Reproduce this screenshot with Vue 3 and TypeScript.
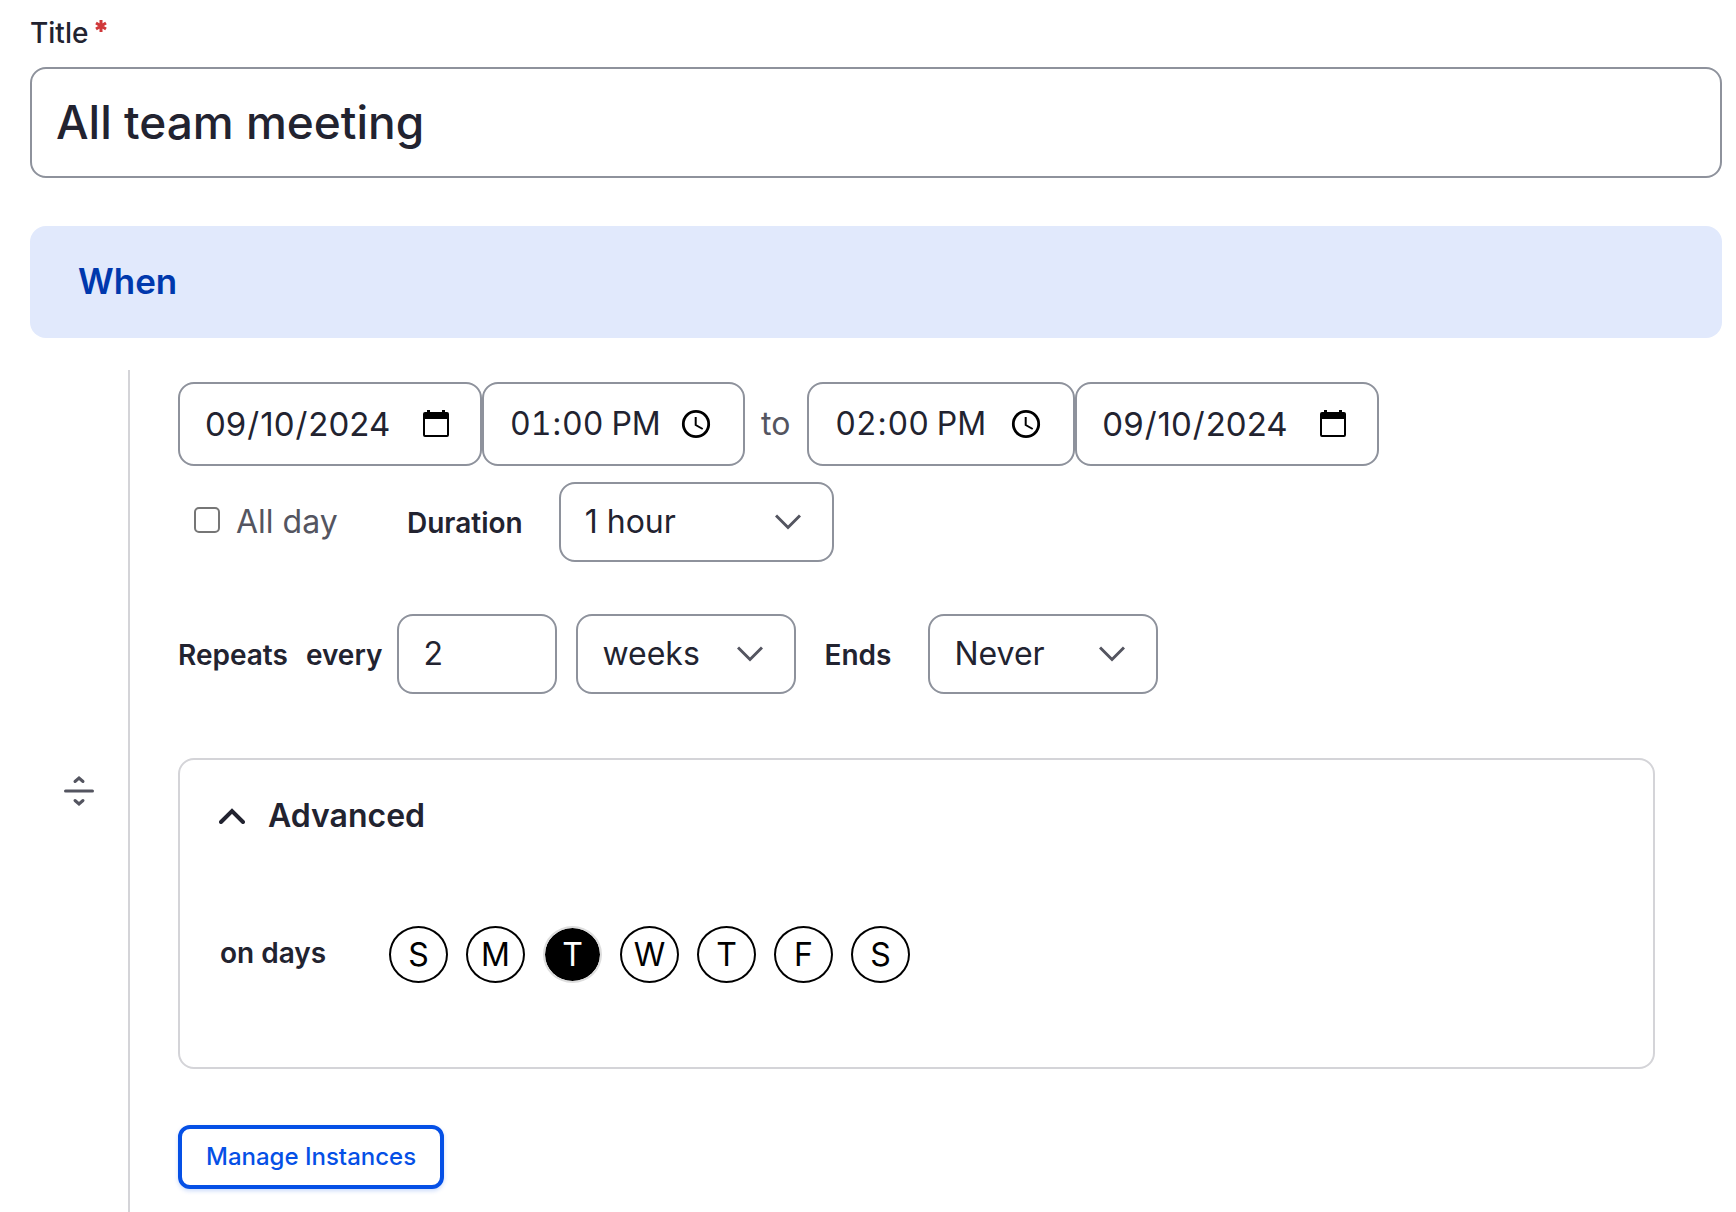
<script setup lang="ts">
import { ref } from 'vue'

interface Day {
  id: string
  letter: string
  name: string
  on: boolean
}

const title = ref('All team meeting')
const startDate = ref('2024-09-10')
const startTime = ref('13:00')
const endTime = ref('14:00')
const endDate = ref('2024-09-10')
const allDay = ref(false)
const duration = ref('1 hour')
const interval = ref('2')
const unit = ref('weeks')
const ends = ref('Never')

const days = ref<Day[]>([
  { id: 'su', letter: 'S', name: 'Sunday', on: false },
  { id: 'mo', letter: 'M', name: 'Monday', on: false },
  { id: 'tu', letter: 'T', name: 'Tuesday', on: true },
  { id: 'we', letter: 'W', name: 'Wednesday', on: false },
  { id: 'th', letter: 'T', name: 'Thursday', on: false },
  { id: 'fr', letter: 'F', name: 'Friday', on: false },
  { id: 'sa', letter: 'S', name: 'Saturday', on: false },
])
</script>

<template>
  <form class="page" @submit.prevent>
    <label class="label title-label" for="title">Title<svg class="required" viewBox="0 0 12 12" aria-hidden="true"><path d="M6 0v12M1 3l10 6M11 3L1 9" /></svg></label>
    <input id="title" v-model="title" class="field title-input" type="text" required />

    <h2 class="when">When</h2>

    <div class="item">
      <div class="handle">
        <svg width="30" height="30" viewBox="0 0 30 30" aria-hidden="true">
          <path d="M1.5 15h27" />
          <path d="M11 5.5L15 2l4 3.5M11 24.5l4 3.5 4-3.5" />
        </svg>
      </div>

      <div class="body">
        <div class="row range">
          <input v-model="startDate" class="field date" type="date" aria-label="Start date" />
          <input v-model="startTime" class="field time" type="time" aria-label="Start time" />
          <span class="to">to</span>
          <input v-model="endTime" class="field time end" type="time" aria-label="End time" />
          <input v-model="endDate" class="field date" type="date" aria-label="End date" />
        </div>

        <div class="row options">
          <label class="all-day"><input v-model="allDay" type="checkbox" />All day</label>
          <label class="label" for="duration">Duration</label>
          <div class="select duration">
            <select id="duration" v-model="duration" class="field">
              <option>1 hour</option>
              <option>2 hours</option>
            </select>
            <svg class="chevron" viewBox="0 0 26 16" aria-hidden="true"><path d="M1 1.5l12 12 12-12" /></svg>
          </div>
        </div>

        <div class="row repeats">
          <span class="label">Repeats</span>
          <label class="label every" for="interval">every</label>
          <input id="interval" v-model="interval" class="field interval" type="text" inputmode="numeric" />
          <div class="select unit">
            <select v-model="unit" class="field" aria-label="Repeat unit">
              <option>days</option>
              <option>weeks</option>
              <option>months</option>
            </select>
            <svg class="chevron" viewBox="0 0 26 16" aria-hidden="true"><path d="M1 1.5l12 12 12-12" /></svg>
          </div>
          <label class="label ends-label" for="ends">Ends</label>
          <div class="select ends">
            <select id="ends" v-model="ends" class="field">
              <option>Never</option>
              <option>On date</option>
            </select>
            <svg class="chevron" viewBox="0 0 26 16" aria-hidden="true"><path d="M1 1.5l12 12 12-12" /></svg>
          </div>
        </div>

        <details class="advanced" open>
          <summary>
            <svg class="caret" viewBox="0 0 26 16" aria-hidden="true"><path d="M2 14L13 3l11 11" /></svg>
            <span>Advanced</span>
          </summary>
          <div class="row days-row" role="group" aria-labelledby="days-label">
            <span id="days-label" class="label days-label">on days</span>
            <div class="days">
              <label v-for="day in days" :key="day.id" class="day">
                <input v-model="day.on" type="checkbox" :aria-label="day.name" />
                <span>{{ day.letter }}</span>
              </label>
            </div>
          </div>
        </details>

        <button class="manage" type="button">Manage Instances</button>
      </div>
    </div>
  </form>
</template>

<style>
body {
  background: #fff;
}
</style>

<style scoped>
.page {
  display: flex;
  flex-direction: column;
  box-sizing: border-box;
  min-height: 100vh;
  padding: 15px 14px 0 30px;
  color: #222330;
  font-family: Inter, "Liberation Sans", sans-serif;
  font-size: 32px;
  line-height: 40px;
}

.page * {
  box-sizing: border-box;
}

.label {
  font-size: 28px;
  font-weight: 600;
  line-height: 36px;
}

.title-label {
  display: flex;
  gap: 7px;
  margin-bottom: 16px;
  font-weight: 500;
}

.required {
  width: 12px;
  height: 12px;
  margin-top: 5px;
  fill: none;
  stroke: #d0383a;
  stroke-width: 3;
}

.field {
  height: 80px;
  margin: 0;
  padding: 0 24px;
  border: 2px solid #8e929c;
  border-radius: 16px;
  outline: none;
  background: #fff;
  color: #222330;
  font: inherit;
}

.title-input {
  width: 100%;
  height: 111px;
  padding-bottom: 2px;
  font-size: 46px;
  font-weight: 500;
}

.when {
  margin: 48px 0 32px;
  padding: 31px 48px 33px;
  border-radius: 16px;
  background: #e1e9fc;
  color: #0038ad;
  font-size: 35px;
  font-weight: 600;
  line-height: 48px;
}

.item {
  display: flex;
  flex: 1;
}

.handle {
  display: flex;
  flex: none;
  align-items: center;
  justify-content: center;
  width: 98px;
}

.handle svg {
  fill: none;
  stroke: #545560;
  stroke-width: 3;
  stroke-linecap: round;
}

.body {
  flex: 1;
  padding: 12px 67px 22px 48px;
  border-left: 2px solid #d4d4d8;
}

.row {
  display: flex;
  align-items: center;
}

.options .label,
.repeats .label {
  padding-top: 2px;
}

.range .field {
  height: 84px;
}

.range .date {
  width: 304px;
  padding: 0 28px 0 24px;
  font-size: 33px;
}

.range .time {
  width: 263px;
  padding: 0 31px 0 25px;
  font-variant-numeric: tabular-nums;
}

.range .end {
  width: 268px;
}

.date::-webkit-calendar-picker-indicator,
.time::-webkit-calendar-picker-indicator {
  width: 32px;
  height: 32px;
  margin: 0;
  padding: 0;
  background-position: center;
  background-repeat: no-repeat;
  background-size: 32px 32px;
}

.date::-webkit-calendar-picker-indicator {
  background-image: url("data:image/svg+xml,%3Csvg xmlns='http://www.w3.org/2000/svg' viewBox='0 0 32 32'%3E%3Cpath d='M3 6a2 2 0 0 1 2-2h2V2h3v2h12V2h3v2h2a2 2 0 0 1 2 2v21a2 2 0 0 1-2 2H5a2 2 0 0 1-2-2zM5 11v16h22V11z' fill-rule='evenodd'/%3E%3C/svg%3E");
}

.time::-webkit-calendar-picker-indicator {
  background-image: url("data:image/svg+xml,%3Csvg xmlns='http://www.w3.org/2000/svg' viewBox='0 0 32 32' fill='none' stroke='%23000'%3E%3Ccircle cx='16' cy='16' r='12.7' stroke-width='2.8'/%3E%3Cpath d='M15.7 9v8l7 4' stroke-width='2'/%3E%3C/svg%3E");
}

.to {
  margin: 0 17px 0 16px;
  color: #545560;
}

.options {
  margin-top: 16px;
}

.all-day {
  display: flex;
  align-items: center;
  gap: 16px;
  width: 229px;
  padding-left: 16px;
  color: #545560;
}

.all-day input {
  width: 26px;
  height: 26px;
  margin: 0 0 4px;
  border: 2px solid #767676;
  border-radius: 5px;
  appearance: none;
}

.select {
  position: relative;
}

.select .field {
  display: block;
  width: 100%;
  appearance: none;
}

.chevron {
  position: absolute;
  top: 32px;
  right: 33px;
  width: 26px;
  height: 16px;
  fill: none;
  stroke: #545560;
  stroke-width: 3;
  pointer-events: none;
}

.duration {
  width: 275px;
  margin-left: 36px;
}

.repeats {
  margin-top: 52px;
}

.every {
  margin: 0 15px 0 18px;
}

.interval {
  width: 160px;
  margin-right: 19px;
  padding-bottom: 2px;
}

.unit {
  width: 220px;
}

.ends-label {
  margin: 0 37px 0 28px;
}

.ends {
  width: 230px;
}

.advanced {
  height: 311px;
  margin-top: 64px;
  padding: 36px 39px;
  border: 2px solid #d4d4d8;
  border-radius: 16px;
}

.advanced summary {
  display: flex;
  align-items: center;
  gap: 23px;
  font-weight: 600;
  list-style: none;
}

.caret {
  width: 26px;
  height: 16px;
  fill: none;
  stroke: #222330;
  stroke-width: 4;
  stroke-linecap: round;
}

.days-row {
  margin-top: 90px;
}

.days-label {
  width: 170px;
  padding: 0 0 4px 1px;
}

.days {
  display: flex;
  gap: 18px;
}

.day {
  position: relative;
  width: 59px;
  height: 57px;
  color: #000;
}

.day input {
  position: absolute;
  inset: 0;
  width: 100%;
  height: 100%;
  margin: 0;
  opacity: 0;
}

.day span {
  display: flex;
  align-items: center;
  justify-content: center;
  height: 100%;
  border: 2px solid #000;
  border-radius: 50%;
}

.day input:checked + span {
  border-color: #ddd;
  background: #000;
  background-clip: padding-box;
  color: #fff;
}

.manage {
  display: block;
  height: 64px;
  margin-top: 56px;
  padding: 0 24px 2px;
  border: 4px solid #0550e6;
  border-radius: 12px;
  background: #fff;
  box-shadow: 0 2px 4px #0550e633;
  color: #0550e6;
  font-family: inherit;
  font-size: 24px;
  font-weight: 500;
}
</style>
